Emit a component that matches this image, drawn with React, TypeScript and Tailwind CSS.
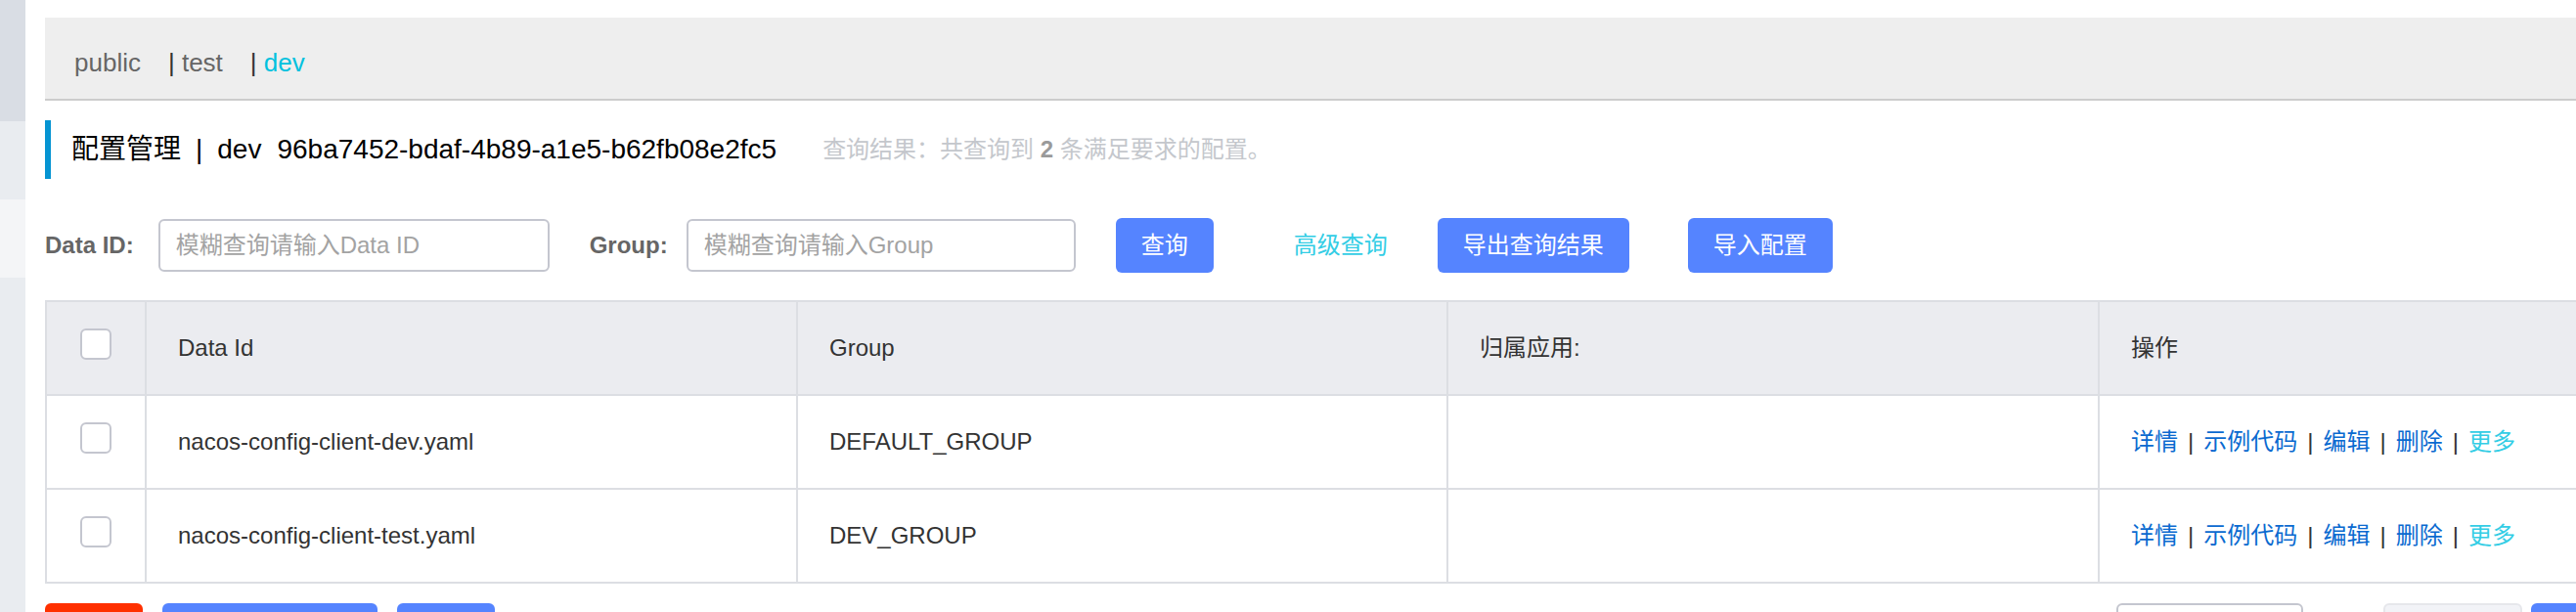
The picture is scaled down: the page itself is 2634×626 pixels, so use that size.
const rows = [
  { id: "nacos-config-client-dev.yaml", group: "DEFAULT_GROUP" },
  { id: "nacos-config-client-test.yaml", group: "DEV_GROUP" },
];

const Checkbox = () => (
  <div className="mb-2 h-8 w-8 rounded-md border-2 border-[#c4c6cf] bg-white" />
);

const Actions = () => {
  const links = ["详情", "示例代码", "编辑", "删除"];
  return (
    <div className="flex items-center text-[24px]">
      {links.map((l) => (
        <span key={l} className="flex items-center">
          <span className="text-[#0a6ad0]">{l}</span>
          <span className="mx-[10px] text-[#333]">|</span>
        </span>
      ))}
      <span className="text-[#33cde5]">更多</span>
    </div>
  );
};

const App = () => {
  return (
    <div className="flex h-[626px] w-[2634px] overflow-hidden bg-white font-['Liberation_Sans','Noto_Sans_CJK_SC',sans-serif]">
      <div className="flex w-[26px] shrink-0 flex-col">
        <div className="h-[124px] bg-[#d9dde4]" />
        <div className="h-[80px] bg-[#e9ecf0]" />
        <div className="h-[80px] bg-[#f4f5f7]" />
        <div className="flex-1 bg-[#e9ecf0]" />
      </div>

      <div className="w-[2766px] shrink-0 pl-5 pt-[18px]">
        {/* namespace tabs */}
        <div className="flex h-[85px] items-start gap-[28px] border-b-2 border-[#cccccc] bg-[#eeeeee] pl-[30px] pt-[33px] text-[26px] leading-[26px] text-[#666]">
          <span>public</span>
          <span>
            <span className="text-[#333]">|</span> test
          </span>
          <span>
            <span className="text-[#333]">|</span> <span className="text-[#00c1de]">dev</span>
          </span>
        </div>

        {/* title */}
        <div className="mt-5 flex h-[60px] items-center border-l-[6px] border-[#0594d2] pl-[21px]">
          <span className="text-[28px] text-black">配置管理</span>
          <span className="mx-[15px] text-[28px] text-black">|</span>
          <span className="text-[28px] text-black">dev</span>
          <span className="ml-4 text-[28px] text-black">96ba7452-bdaf-4b89-a1e5-b62fb08e2fc5</span>
          <span className="ml-[47px] text-[24px] text-[#c4c7cc]">
            查询结果：共查询到 <b className="text-[#9a9a9a]">2</b> 条满足要求的配置。
          </span>
        </div>

        {/* search bar */}
        <div className="mt-[41px] flex h-[54px] items-center text-[24px]">
          <span className="font-bold text-[#666]">Data ID:</span>
          <div className="ml-[25px] flex h-[54px] w-[400px] items-center rounded-md border-2 border-[#c4c6cf] px-4 text-[#a3a3a3]">
            模糊查询请输入Data ID
          </div>
          <span className="ml-[41px] font-bold text-[#666]">Group:</span>
          <div className="ml-[19px] flex h-[54px] w-[398px] items-center rounded-md border-2 border-[#c4c6cf] px-4 text-[#a3a3a3]">
            模糊查询请输入Group
          </div>
          <button className="ml-[41px] h-[56px] rounded-md bg-[#5584ff] px-[26px] text-white">查询</button>
          <span className="ml-[82px] text-[#33cde5]">高级查询</span>
          <button className="ml-[51px] h-[56px] rounded-md bg-[#5584ff] px-[26px] text-white">导出查询结果</button>
          <button className="ml-[60px] h-[56px] rounded-md bg-[#5584ff] px-[26px] text-white">导入配置</button>
        </div>

        {/* table */}
        <div className="mt-[29px] border-l-2 border-t-2 border-[#dcdee3] text-[24px] text-[#333]">
          <div className="grid h-[96px] grid-cols-[102px_666px_665px_666px_666px] border-b-2 border-[#dcdee3] bg-[#ebecf0]">
            <div className="flex items-center justify-center border-r-2 border-[#dcdee3]">
              <Checkbox />
            </div>
            <div className="flex items-center border-r-2 border-[#dcdee3] pl-[32px]">Data Id</div>
            <div className="flex items-center border-r-2 border-[#dcdee3] pl-[32px]">Group</div>
            <div className="flex items-center border-r-2 border-[#dcdee3] pl-[32px]">归属应用:</div>
            <div className="flex items-center border-r-2 border-[#dcdee3] pl-[32px]">操作</div>
          </div>
          {rows.map((r) => (
            <div key={r.id} className="grid h-[96px] grid-cols-[102px_666px_665px_666px_666px] border-b-2 border-[#dcdee3] bg-white">
              <div className="flex items-center justify-center border-r-2 border-[#dcdee3]">
                <Checkbox />
              </div>
              <div className="flex items-center border-r-2 border-[#dcdee3] pl-[32px]">{r.id}</div>
              <div className="flex items-center border-r-2 border-[#dcdee3] pl-[32px]">{r.group}</div>
              <div className="flex items-center border-r-2 border-[#dcdee3] pl-[32px]"></div>
              <div className="flex items-center border-r-2 border-[#dcdee3] pl-[32px]">
                <Actions />
              </div>
            </div>
          ))}
        </div>

        {/* footer */}
        <div className="mt-5 flex items-start justify-between">
          <div className="flex gap-5">
            <div className="h-[54px] w-[100px] rounded-md bg-[#ff3000]" />
            <div className="h-[54px] w-[220px] rounded-md bg-[#5584ff]" />
            <div className="h-[54px] w-[100px] rounded-md bg-[#5584ff]" />
          </div>
          <div className="flex w-[628px] items-start">
            <div className="h-[54px] w-[198px] rounded-md border-2 border-[#c4c6cf] bg-white" />
            <div className="ml-[82px] h-[54px] w-[146px] rounded-md border-2 border-[#e6e7eb] bg-[#f2f3f7]" />
            <div className="ml-[9px] h-[54px] w-[56px] rounded-md bg-[#5584ff]" />
            <div className="ml-[9px] h-[54px] w-[146px] rounded-md border-2 border-[#c4c6cf] bg-white" />
          </div>
        </div>
      </div>
    </div>
  );
};

export default App;
